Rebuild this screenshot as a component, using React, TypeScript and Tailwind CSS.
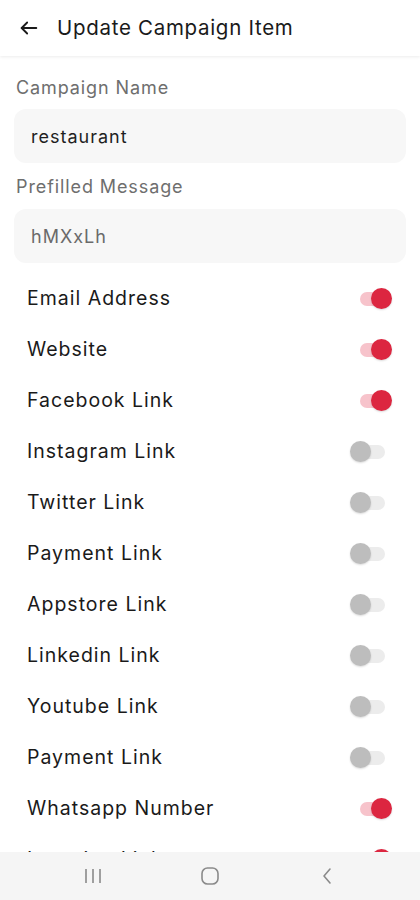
import React, { useState } from 'react';

// Toggle rows shown under the form fields
const initialLinks = [
  { label: 'Email Address', on: true },
  { label: 'Website', on: true },
  { label: 'Facebook Link', on: true },
  { label: 'Instagram Link', on: false },
  { label: 'Twitter Link', on: false },
  { label: 'Payment Link', on: false },
  { label: 'Appstore Link', on: false },
  { label: 'Linkedin Link', on: false },
  { label: 'Youtube Link', on: false },
  { label: 'Payment Link', on: false },
  { label: 'Whatsapp Number', on: true },
  { label: 'Location Link', on: true },
];

const Toggle: React.FC<{ on: boolean; onClick: () => void }> = ({ on, onClick }) => (
  <button onClick={onClick} className="relative w-[42px] h-[22px] flex items-center">
    <span
      className={`absolute left-[10px] w-[25px] h-[14px] rounded-full ${on ? 'bg-[#f7c3cb]' : 'bg-[#ececec]'}`}
    />
    <span
      className={`absolute w-[21px] h-[21px] rounded-full shadow-[0_1px_2px_rgba(0,0,0,0.15)] ${
        on ? 'left-[21px] bg-[#dc2640]' : 'left-0 bg-[#bdbdbd]'
      }`}
    />
  </button>
);

export default function App() {
  const [links, setLinks] = useState(initialLinks);

  const toggle = (i: number) =>
    setLinks(prev => prev.map((l, idx) => (idx === i ? { ...l, on: !l.on } : l)));

  return (
    <div className="w-[420px] h-[900px] flex flex-col bg-white font-['Inter',sans-serif] overflow-hidden">
      {/* Header */}
      <div className="h-14 shrink-0 flex items-center gap-[17px] pl-[18px] shadow-[0_1px_3px_rgba(0,0,0,0.08)] z-10">
        <svg width="22" height="22" viewBox="0 0 24 24" fill="none" stroke="#1a1a1a" strokeWidth="2" strokeLinecap="round" strokeLinejoin="round">
          <path d="M20 12H4" />
          <path d="M10 6l-6 6 6 6" />
        </svg>
        <h1 className="text-[20.5px] tracking-[0.7px] text-[#1a1a1a]">Update Campaign Item</h1>
      </div>

      {/* Content */}
      <div className="flex-1 overflow-hidden px-[14px]">
        <div className="pt-5 pl-[2px] text-[18px] tracking-[0.9px] leading-6 text-[#6e6e6e]">Campaign Name</div>
        <div className="mt-[9px] h-[54px] rounded-xl bg-[#f7f7f7] flex items-center px-[17px] text-[18px] tracking-[1px] text-[#1f1f1f]">
          restaurant
        </div>

        <div className="mt-3 pl-[2px] text-[18px] tracking-[0.9px] leading-6 text-[#6e6e6e]">Prefilled Message</div>
        <div className="mt-[10px] h-[54px] rounded-xl bg-[#f7f7f7] flex items-center px-[17px] text-[18px] tracking-[1px] text-[#6a6a6a]">
          hMXxLh
        </div>

        <div className="mt-[10px]">
          {links.map((l, i) => (
            <div key={i} className="h-[51px] flex items-center justify-between pl-[13px] pr-[14px]">
              <span className="text-[19.5px] tracking-[1px] text-[#1a1a1a]">{l.label}</span>
              <Toggle on={l.on} onClick={() => toggle(i)} />
            </div>
          ))}
        </div>
      </div>

      {/* Android nav bar */}
      <div className="h-12 shrink-0 bg-[#f5f5f5] flex items-center pl-[34px]">
        <div className="w-[117px] flex justify-center">
          <svg width="20" height="16" viewBox="0 0 20 16" fill="none" stroke="#8a8a8a" strokeWidth="1.6">
            <path d="M3 1v14M10 1v14M17 1v14" />
          </svg>
        </div>
        <div className="w-[117px] flex justify-center">
          <svg width="20" height="20" viewBox="0 0 20 20" fill="none" stroke="#8a8a8a" strokeWidth="1.6">
            <rect x="2" y="2" width="16" height="16" rx="5.5" />
          </svg>
        </div>
        <div className="w-[117px] flex justify-center">
          <svg width="14" height="18" viewBox="0 0 14 18" fill="none" stroke="#8a8a8a" strokeWidth="1.6" strokeLinecap="round" strokeLinejoin="round">
            <path d="M10 2L4 9l6 7" />
          </svg>
        </div>
      </div>
    </div>
  );
}
